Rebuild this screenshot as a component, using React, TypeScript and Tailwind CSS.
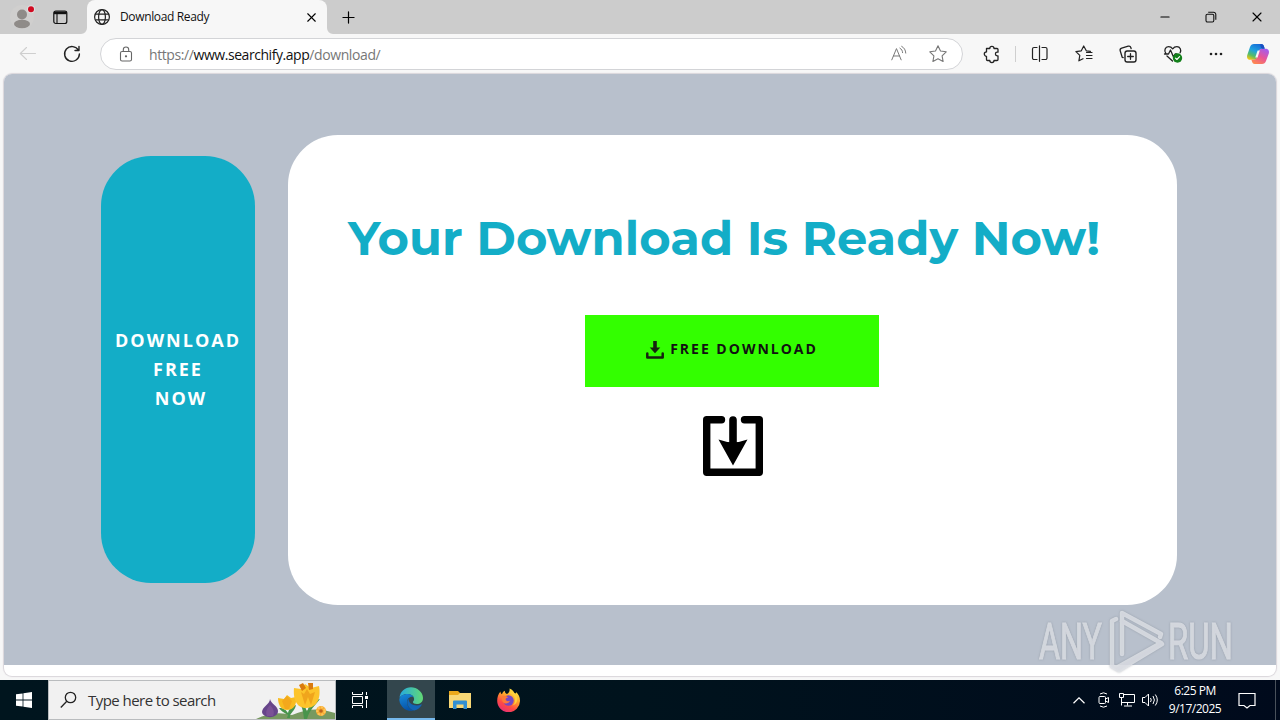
import type { ReactNode } from 'react'
import { Minus, X, Plus } from 'lucide-react'

const ui = "font-['Open_Sans','Noto_Sans',sans-serif]"

function Icon({ size = 20, children, className = '' }: { size?: number; children: ReactNode; className?: string }) {
  return (
    <svg width={size} height={size} viewBox="0 0 20 20" fill="none" stroke="currentColor" strokeWidth="1.1" strokeLinecap="round" strokeLinejoin="round" className={`shrink-0 ${className}`}>
      {children}
    </svg>
  )
}

function TitleBar() {
  return (
    <div className="flex h-[34px] bg-[#cccccc] text-black">
      <div className="flex w-[87px] items-center">
        <svg width="26" height="26" viewBox="0 0 26 26" className="ml-[9px]">
          <circle cx="13" cy="13" r="12" fill="#d0cfce" />
          <circle cx="13" cy="10.5" r="5" fill="#8f8b88" />
          <ellipse cx="13" cy="20" rx="8" ry="4.2" fill="#8f8b88" />
          <circle cx="22" cy="5.3" r="4" fill="#dedede" />
          <circle cx="22" cy="5.3" r="3" fill="#d10a20" />
        </svg>
        <svg width="16" height="16" viewBox="0 0 16 16" fill="none" stroke="#111" className="ml-[17px]">
          <rect x="1.8" y="2" width="13" height="12.5" rx="2" strokeWidth="1.2" />
          <path d="M2 3.8h12.6" strokeWidth="2.8" />
          <path d="M5 4v10" strokeWidth="1.1" />
        </svg>
      </div>
      <div className="relative flex w-[240px] items-center rounded-t-lg bg-[#f7f7f7]">
        <svg width="6" height="6" className="absolute -left-[6px] bottom-0"><path d="M6 0v6H0a6 6 0 0 0 6-6" fill="#f7f7f7" /></svg>
        <svg width="6" height="6" className="absolute -right-[6px] bottom-0"><path d="M0 0v6h6a6 6 0 0 1-6-6" fill="#f7f7f7" /></svg>
        <svg width="18" height="18" viewBox="0 0 18 18" fill="none" stroke="#222" strokeWidth="1.2" className="ml-1.5">
          <circle cx="9" cy="9" r="7.4" />
          <ellipse cx="9" cy="9" rx="3.4" ry="7.4" />
          <path d="M2.3 6.2h13.4M2.3 11.8h13.4" />
        </svg>
        <span className="ml-[9px] flex-1 text-[12px] tracking-[-0.36px] text-[#111]">Download Ready</span>
        <X size={15} strokeWidth={1.8} className="mr-2" />
      </div>
      <div className="flex flex-1 items-center">
        <Plus size={19} strokeWidth={1.5} className="ml-3" />
        <div className="ml-auto flex items-center">
          <Minus size={14} strokeWidth={2} className="mr-[33px]" />
          <svg width="12" height="12" viewBox="0 0 12 12" fill="none" stroke="#111" strokeWidth="1.1" className="mr-8">
            <rect x="1" y="3.2" width="7.8" height="7.8" rx="1.4" />
            <path d="M3.2 1.3h5.3a2.3 2.3 0 0 1 2.3 2.3v5.2" />
          </svg>
          <X size={16} strokeWidth={1.7} className="mr-[15px]" />
        </div>
      </div>
    </div>
  )
}

function Copilot() {
  return (
    <svg width="24" height="22" viewBox="0 0 24 22" className="shrink-0">
      <defs>
        <linearGradient id="cpA" x1="0.7" y1="0" x2="0.2" y2="1">
          <stop offset="0" stopColor="#1769d8" />
          <stop offset=".45" stopColor="#1fa3df" />
          <stop offset=".75" stopColor="#58bd65" />
          <stop offset="1" stopColor="#f3c613" />
        </linearGradient>
        <linearGradient id="cpB" x1="0.8" y1="0" x2="0.2" y2="1">
          <stop offset="0" stopColor="#a25cf0" />
          <stop offset=".5" stopColor="#e85498" />
          <stop offset="1" stopColor="#ff8a4c" />
        </linearGradient>
      </defs>
      <path d="M8 1h7.2c1.8 0 2.4 1.1 2.9 2.7l.6 2.1h-2.5c-1.9 0-2.7 1-3.2 2.7l-1.9 6c-.5 1.5-1.2 2.3-2.8 2.3H4.2C1.5 16.8.6 14.5 1.2 12.2L4 4C4.700 1.900 6 1 8 1z" fill="url(#cpA)" />
      <path d="M16 21H8.800c-1.800 0-2.400-1.100-2.900-2.700l-.5-1.600h2.400c1.900 0 2.600-1 3.200-2.700l1.900-6c.5-1.500 1.200-2.200 2.800-2.200h4c2.700 0 3.800 2.300 3.100 4.600L20 18c-.7 2.100-2 3-4 3z" fill="url(#cpB)" />
      <path d="M11.600 7.500h2.200L11.600 14.500H9.300z" fill="#f7f7f7" />
      <path d="M14.500 1c2 0 3 .7 3.600 2.700l.6 2.100h-2.500c-1.500 0-2-4.800-1.700-4.800z" fill="#1a4fc0" />
    </svg>
  )
}

function Toolbar() {
  return (
    <div className="flex h-10 items-center bg-[#f7f7f7] text-[#222]">
      <Icon className="ml-[18px] text-[#cfcfcf]"><path d="M17.500 9.500h-15M8.500 3.500l-6.200 6 6.200 6" /></Icon>
      <Icon className="ml-6" size={20}><path strokeWidth="1.4" d="M16.500 6.400A7.400 7.400 0 1 0 17.400 10M17 2.500v4h-4" /></Icon>
      <div className="ml-[18px] flex h-8 w-[863px] items-center rounded-full border border-[#d3d4d7] bg-white text-[#666]">
        <svg width="14" height="16" viewBox="0 0 14 16" fill="none" stroke="#666" strokeWidth="1.1" className="ml-[18px]">
          <rect x="1.500" y="5.500" width="11" height="9.500" rx="1.600" />
          <path d="M4.300 5.500V3.700a2.700 2.700 0 0 1 5.400 0v1.800" />
          <circle cx="7" cy="10.300" r=".6" fill="#666" />
        </svg>
        <span className="ml-[16px] flex-1 text-[14px] tracking-[-0.4px] text-[#777]">
          https://<span className="tracking-[-0.45px] text-[#111]">www.searchify.app</span>/download/
        </span>
        <Icon size={18} className="mr-5 text-[#777]">
          <path d="M2 16.500L7.200 4l5.200 12.500M3.800 12.200h6.800M11 3.500c2 1.200 2.800 2.700 3 5M13 1.500c3 1.700 4.200 4 4.500 7.500" />
        </Icon>
        <Icon size={20} className="mr-[14px] text-[#777]"><path d="M10 1.800l2.500 5.200 5.700.8-4.100 4 1 5.700-5.100-2.700-5.100 2.700 1-5.700-4.100-4 5.700-.8z" /></Icon>
      </div>
      <div className="ml-[19px] flex items-center">
        <Icon><path strokeWidth="1.300" d="M4.500 4.500h3.300a2.100 2.100 0 0 1 4.200 0h3a1 1 0 0 1 1 1v2.700h-.8a1.800 1.800 0 0 0 0 3.600h.8v3.700a1 1 0 0 1-1 1h-3a2.100 2.100 0 0 1-4.200 0H5.500a1 1 0 0 1-1-1v-3.200a2.200 2.200 0 0 1 0-4.400z" /></Icon>
        <span className="ml-[13px] h-4 w-px bg-[#cfcfcf]" />
        <Icon className="ml-[14px]"><path strokeWidth="1.200" d="M7 3.500H4a1.500 1.500 0 0 0-1.500 1.500v9A1.500 1.500 0 0 0 4 15.500h3M12 3.500h3.500A1.500 1.500 0 0 1 17 5v9a1.500 1.500 0 0 1-1.500 1.500H12M9.500 1.800v15.500" /></Icon>
        <Icon className="ml-6"><path strokeWidth="1.200" d="M16.500 7.300l-4.200-.5L9.700 2 7.300 6.800l-5.400.8 3.900 3.800-.9 5.400 4.100-2.100M12.500 8.500H18M12.500 11.500H18M12.500 14.500H18" /></Icon>
        <Icon className="ml-6">
          <rect x="7" y="7" width="11" height="11" rx="2.200" strokeWidth="1.400" />
          <path strokeWidth="1.300" d="M12.500 9.700v5.600M9.700 12.500h5.600M5.200 13.600l-1-.3-2-6.500a2.200 2.200 0 0 1 1.500-2.700l6.500-1.900a2.200 2.200 0 0 1 2.700 1.500l.2.900" />
        </Icon>
        <Icon className="ml-[25px]" size={20}>
          <path strokeWidth="1.300" d="M2.800 9.300C.8 6.500 2.100 2.700 5.500 2.700c2 0 3.200.8 4.200 2.100 1-1.300 2.200-2.100 4.200-2.100 3.300 0 4.700 3.300 3.200 6M4 12l5.500 5M1.500 10h4l2-4 3 7 1.600-3h1.500" />
          <circle cx="14.500" cy="14" r="4.700" fill="#13801b" stroke="none" />
          <path d="M12.500 14.100l1.400 1.400 2.700-2.800" stroke="#fff" />
        </Icon>
        <svg width="16" height="4" className="ml-[25px]" fill="#222"><circle cx="3" cy="2" r="1.300" /><circle cx="8" cy="2" r="1.300" /><circle cx="13" cy="2" r="1.300" /></svg>
        <div className="ml-[22px]"><Copilot /></div>
      </div>
    </div>
  )
}

function DownloadPage() {
  return (
    <main className="flex h-[591px] items-start bg-[#b8c0cc] font-['Open_Sans',sans-serif]">
      <aside className="ml-[97px] mt-[82px] flex h-[427px] w-[154px] flex-col items-center justify-center rounded-[50px] bg-[#13adc7] text-[18px] font-bold leading-[29px] tracking-[2px] text-white">
        <span>DOWNLOAD</span>
        <span>FREE</span>
        <span className="pl-1.5">NOW</span>
      </aside>
      <section className="ml-[33px] mt-[61px] flex h-[470px] w-[889px] flex-col rounded-[50px] bg-white">
        <h1 className="ml-[60px] mt-[72px] flex h-[62px] w-[770px] items-center whitespace-nowrap font-['Montserrat','Inter',sans-serif] text-[48px] font-bold text-[#13adc7]">
          Your Download Is Ready Now!
        </h1>
        <button className="ml-[297px] mt-[46px] flex h-[72px] w-[294px] items-center justify-center bg-[#33ff00] pb-[5px] text-[14px] font-bold tracking-[2px] text-[#111]">
          <svg width="18" height="18" viewBox="0 0 18 18" fill="#16230f" className="mr-[6px] mt-0.5">
            <path d="M7.200 0h3.600v6.500h3.500L9 12.300 3.700 6.500h3.500z" />
            <path d="M1.300 12.500V16.500h15.400V12.500" fill="none" stroke="#16230f" strokeWidth="2.500" strokeLinecap="round" strokeLinejoin="round" />
          </svg>
          FREE DOWNLOAD
        </button>
        <svg width="60" height="60" viewBox="0 0 60 60" className="ml-[415px] mt-[29px]">
          <path d="M18.500 3.700H3.700v52.600h52.600V3.700H41.500" fill="none" stroke="#000" strokeWidth="7.400" strokeLinecap="round" strokeLinejoin="round" />
          <path d="M30 4v26" stroke="#000" strokeWidth="7.600" strokeLinecap="round" />
          <path d="M15.500 23.500q14.500 5.500 29 0L30 49.500z" />
        </svg>
      </section>
    </main>
  )
}

function Watermark() {
  return (
    <svg width="220" height="74" viewBox="0 0 220 74" className="absolute left-[1034px] top-[605px] overflow-visible [filter:drop-shadow(0_0_1px_rgba(110,115,125,0.55))]">
      <g fill="#e3e6eb" stroke="#e3e6eb" strokeWidth="1" opacity=".78" fontFamily="Roboto, sans-serif" fontSize="50" fontWeight="400">
        <text x="5" y="54" textLength="63" lengthAdjust="spacingAndGlyphs">ANY</text>
        <text x="134" y="54" textLength="65" lengthAdjust="spacingAndGlyphs">RUN</text>
      </g>
      <g fill="none" stroke="#e3e6eb" strokeWidth="4.500" strokeLinejoin="round" strokeLinecap="round" opacity=".78">
        <path d="M82 14l-4 2v45l7 4 43-26" />
        <path d="M84 62L127 38 88 16" />
        <path d="M88 49V8l39 21-1 3" />
      </g>
    </svg>
  )
}

function Flowers() {
  return (
    <svg width="79" height="38" viewBox="0 0 79 38" className="self-end">
      <path d="M0 38q18-9 36-4Q58 24 79 32v6z" fill="#779960" />
      <path d="M32 34c-5-3-8-5-9-7 5 0 7 2 9 5 1-5 5-7 8-8-1 5-4 7-6 10v3h-3zM48 38c-1-12-4-16-6-18 6 2 8 7 9 11 3-10 8-12 13-13-6 8-10 10-13 20z" fill="#48944c" />
      <path d="M14 18c1 5 8 7 8 12 0 8-15 8-16 1 0-5 8-8 8-13z" fill="#66458a" />
      <path d="M14 24c-3 3-5 7-3 11h6c2-4 0-8-3-11z" fill="#7a5296" />
      <path d="M22 17l6 1 3-4 4 3 5-1c1 7-2 13-9 13-6 0-9-5-9-12z" fill="#f8bc20" />
      <path d="M26 20l5-5 5 5-3 8h-4z" fill="#f3a81c" />
      <path d="M38 7l7 1 4-5 6 4 8-2c2 11-1 22-13 22-10 0-13-10-12-20z" fill="#fcc42b" />
      <path d="M45 11l4 13 3-8 3 8 4-13-5 2-3-5-3 5z" fill="#f0a51c" />
      <path d="M43 4l4-2 3 5-4 3zM52 2l5 0 0 6-4 1z" fill="#d97b0f" />
      <circle cx="65" cy="30" r="5" fill="#f7ae32" />
      <circle cx="65" cy="30" r="3.800" fill="none" stroke="#ffc45c" strokeDasharray="2 1.500" strokeWidth="2" />
      <circle cx="65" cy="30" r="1.800" fill="#bd631d" />
    </svg>
  )
}

function Edge() {
  return (
    <svg width="24" height="24" viewBox="0 0 24 24">
      <defs>
        <linearGradient id="edTop"><stop stopColor="#24a9e1" /><stop offset="1" stopColor="#62d974" /></linearGradient>
        <linearGradient id="edBottom" x2=".3" y2="1"><stop stopColor="#178bdc" /><stop offset="1" stopColor="#0754a8" /></linearGradient>
      </defs>
      <path d="M.5 11C1 4.500 6 .2 12 .2S24 5 24 11c0 4-2.900 6-6.200 6-2.300 0-3.900-1-3.900-2 0-.7 1.200-1 1.200-3 0-2.500-2.500-5-6.300-5C4.500 7 1.500 9 .5 11z" fill="url(#edTop)" />
      <path d="M.3 13C.5 9 4.500 7 8.800 7c3 0 5 1.500 5.800 3-4-1-7 2-6.500 6 .4 4 3.500 6.800 7 7.500A12 12 0 0 1 .3 13z" fill="url(#edBottom)" />
      <path d="M9.500 11.500C6.500 15 9 22 15.200 23.500c3.500-.8 6-3 7.500-5.500.3-.6-.2-.8-.7-.5C17 20 9.500 17.500 9.500 11.500z" fill="#1265b5" />
    </svg>
  )
}

function Firefox() {
  return (
    <svg width="23" height="24" viewBox="0 0 23 24">
      <defs>
        <linearGradient id="ff" x1=".8" y1="0" x2=".25" y2="1"><stop stopColor="#fff044" /><stop offset=".4" stopColor="#ffa12b" /><stop offset=".7" stopColor="#ff4a44" /><stop offset="1" stopColor="#e52d79" /></linearGradient>
      </defs>
      <path d="M12.500.5c3 1.200 4.300 3 5 5 1 .2 1.800-.3 1.500-1.500 2.500 2.200 4 5 4 8.700A11.400 11.400 0 0 1 .2 13C.2 9.300 1.200 6 3.500 3.500c0 1.500.5 2.300 1.500 2.800.5-1.800 1.500-2.800 2.800-3.500 0 1.600.7 2.700 2.200 3.200C12 5 13 3 12.500.5z" fill="url(#ff)" />
      <circle cx="11.500" cy="12.500" r="5.200" fill="#7548c4" />
      <path d="M5 8c2.500-1 5 .2 6.500 1.500-2.500.2-3.500 1.300-2.500 2.800 1.200 1.500 3 .7 4 .4-1.200 3.500-7.500 4.300-8-1.200z" fill="#ff7a36" />
      <path d="M12 5c4 .7 6 4 6 7.500 0 2-1 4-2.500 5 5-1.500 6-7 3.500-11l-5-5c1 2-.5 3-2 3.500z" fill="#ffd03c" />
    </svg>
  )
}

function Taskbar() {
  return (
    <footer className="flex h-10 bg-linear-to-r from-[#00151e] via-[#00131d] to-[#000a1c] text-white">
      <div className="flex w-12 items-center justify-center">
        <svg width="16" height="16" viewBox="0 0 16 16" fill="#fff"><path d="M0 2.300L6.600 1.400v6.200H0zM7.400 1.300L16 0v7.600H7.400zM0 8.400h6.600v6.200L0 13.700zM7.400 8.400H16V16l-8.600-1.300z" /></svg>
      </div>
      <div className="flex w-72 items-center border border-[#b9bcbe] bg-[#f1f1f1] text-[#333]">
        <svg width="18" height="18" viewBox="0 0 18 18" fill="none" stroke="#222" strokeWidth="1.300" className="ml-[11px]"><circle cx="10.500" cy="6.500" r="5.200" /><path d="M6.800 10.200L.8 16.500" /></svg>
        <span className="ml-[10px] flex-1 whitespace-nowrap text-[15px] tracking-[-0.55px]">Type here to search</span>
        <Flowers />
      </div>
      <div className="flex w-[51px] items-center justify-center pr-[3px]">
        <svg width="18" height="16" viewBox="0 0 18 16" fill="none" stroke="#fff"><path d="M1.500 0v2.500h10V0M1.500 16v-2.500h10V16M1.500 4.500h10v7h-10zM15.500 0v3M15.500 8v8" /><path d="M14 5.500h3" strokeWidth="3" /></svg>
      </div>
      <div className="flex w-12 items-center justify-center border-b-2 border-[#76b9ed] bg-[#33464d]"><Edge /></div>
      <div className="flex w-[49px] items-center justify-center">
        <svg width="22" height="20" viewBox="0 0 22 20">
          <path d="M0 1h9l2 2h11v15H0z" fill="#eba91c" />
          <path d="M0 5h9l2-2h11v15H0z" fill="#f8d775" />
          <path d="M4 19v-7.500q0-1 1-1h12q1 0 1 1V19h-3.500v-4.500h-7V19z" fill="#318fd1" />
        </svg>
      </div>
      <div className="flex w-12 items-center justify-center"><Firefox /></div>
      <div className="ml-auto flex items-center">
        <svg width="12" height="7" viewBox="0 0 12 7" fill="none" stroke="#fff" strokeWidth="1.200"><path d="M.5 6.200L6 .8l5.500 5.400" /></svg>
        <svg width="14" height="16" viewBox="0 0 14 16" fill="none" stroke="#fff" className="ml-3"><rect x="2" y="4.500" width="6.500" height="7" rx="1" /><path d="M8.500 7l3-1.500v5l-3-1.500M3 2Q6.500-.4 10 2M3 14q3.500 2.400 7 0" /></svg>
        <svg width="18" height="16" viewBox="0 0 18 16" fill="none" stroke="#fff" className="ml-[7px]"><path d="M5.500 2.500h11v8h-13M1.500 1.500h4v4h-4zM3.500 5.500v8M9.500 10.500v3M6 14h8" /></svg>
        <svg width="18" height="16" viewBox="0 0 18 16" fill="none" stroke="#fff" className="ml-[5px]"><path d="M1.500 5.500H4L7.500 2v12L4 10.500H1.500zM9.500 6q1.500 2 0 4M12 4q2.800 4 0 8M14.300 2.500q4 5.500 0 11" /></svg>
        <div className="ml-[6px] w-[60px] whitespace-nowrap text-center text-[12px] leading-[18px] tracking-[-0.5px]">
          <p>6:25 PM</p>
          <p>9/17/2025</p>
        </div>
        <svg width="18" height="17" viewBox="0 0 18 17" fill="none" stroke="#fff" strokeWidth="1.200" className="ml-[13px]"><path d="M1 1.500h16v12h-5L9 16l-3-2.500H1z" /></svg>
        <span className="ml-[19px] h-10 w-px bg-[#49515b]" />
        <span className="w-1" />
      </div>
    </footer>
  )
}

export default function App() {
  return (
    <div className={`relative flex h-[720px] w-[1280px] flex-col overflow-hidden bg-[#f7f7f7] ${ui}`}>
      <TitleBar />
      <Toolbar />
      <div className="mx-1 mb-1 h-[602px] overflow-hidden rounded-lg bg-white shadow-[0_0_1px_1px_#d9d5da]">
        <DownloadPage />
      </div>
      <Taskbar />
      <Watermark />
    </div>
  )
}
